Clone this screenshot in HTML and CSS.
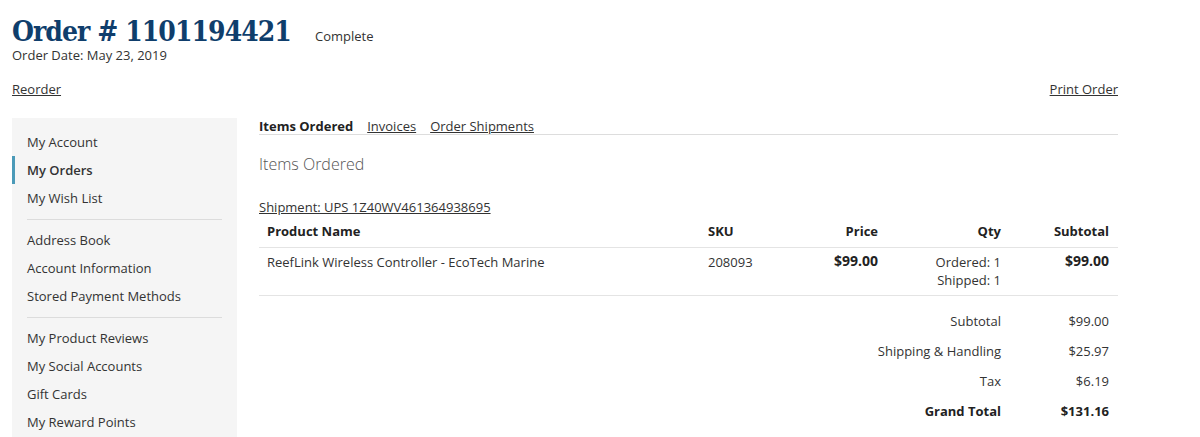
FILE: index.html
```html
<!DOCTYPE html>
<html>
<head>
<meta charset="utf-8">
<link rel="stylesheet" href="styles.css">
</head>
<body>
<div class="page">
  <div class="title-row">
    <h1 class="title">Order # 1101194421</h1>
    <span class="status">Complete</span>
  </div>
  <div class="order-date">Order Date: May 23, 2019</div>
  <div class="actions">
    <a class="link" href="#">Reorder</a>
    <a class="link" href="#">Print Order</a>
  </div>
  <div class="columns">
    <nav class="sidebar">
      <ul class="nav-group">
        <li class="nav-item">My Account</li>
        <li class="nav-item active">My Orders</li>
        <li class="nav-item">My Wish List</li>
      </ul>
      <div class="divider"></div>
      <ul class="nav-group">
        <li class="nav-item">Address Book</li>
        <li class="nav-item">Account Information</li>
        <li class="nav-item">Stored Payment Methods</li>
      </ul>
      <div class="divider"></div>
      <ul class="nav-group">
        <li class="nav-item">My Product Reviews</li>
        <li class="nav-item">My Social Accounts</li>
        <li class="nav-item">Gift Cards</li>
        <li class="nav-item">My Reward Points</li>
      </ul>
    </nav>
    <main class="main">
      <div class="tabs">
        <span class="tab current">Items Ordered</span>
        <a class="tab link" href="#">Invoices</a>
        <a class="tab link" href="#">Order Shipments</a>
      </div>
      <h2 class="section-title">Items Ordered</h2>
      <a class="link shipment" href="#">Shipment: UPS 1Z40WV461364938695</a>
      <table class="items">
        <colgroup>
          <col class="c-name"><col class="c-sku"><col class="c-price"><col class="c-qty"><col class="c-sub">
        </colgroup>
        <thead>
          <tr>
            <th class="left">Product Name</th>
            <th class="left">SKU</th>
            <th>Price</th>
            <th>Qty</th>
            <th>Subtotal</th>
          </tr>
        </thead>
        <tbody>
          <tr>
            <td class="left">ReefLink Wireless Controller - EcoTech Marine</td>
            <td class="left">208093</td>
            <td class="money">$99.00</td>
            <td class="qty">Ordered: 1<br>Shipped: 1</td>
            <td class="money">$99.00</td>
          </tr>
        </tbody>
      </table>
      <div class="totals">
        <div class="t-label">Subtotal</div><div class="t-value">$99.00</div>
        <div class="t-label">Shipping &amp; Handling</div><div class="t-value">$25.97</div>
        <div class="t-label">Tax</div><div class="t-value">$6.19</div>
        <div class="t-label grand">Grand Total</div><div class="t-value grand">$131.16</div>
      </div>
    </main>
  </div>
</div>
</body>
</html>
```

FILE: styles.css
```css
* { box-sizing: border-box; }
html, body { margin: 0; padding: 0; background: #fff; }
body {
  font-family: "Open Sans", "Liberation Sans", sans-serif;
  font-size: 13px;
  color: #333;
  line-height: 18px;
}
.page {
  width: 1106px;
  margin-left: 12px;
  padding-top: 18px;
}
.title-row {
  display: flex;
  align-items: baseline;
  gap: 24px;
  height: 28px;
}
.title {
  margin: 0;
  font-family: "DejaVu Serif Condensed", "DejaVu Serif", serif;
  font-weight: bold;
  font-size: 28px;
  line-height: 28px;
  color: #0f3e6c;
  letter-spacing: -0.95px;
}
.status {
  font-size: 13px;
  color: #333;
  position: relative;
  top: 0;
}
.order-date {
  margin-top: 0;
  line-height: 18px;
}
.actions {
  display: flex;
  justify-content: space-between;
  margin-top: 16px;
}
.link {
  color: #333;
  text-decoration: underline;
}
.columns {
  display: flex;
  gap: 22px;
  margin-top: 20px;
  align-items: flex-start;
}
.sidebar {
  width: 225px;
  flex: none;
  background: #f5f5f5;
  padding: 10px 0 20px;
  min-height: 330px;
}
.nav-group {
  list-style: none;
  margin: 0;
  padding: 0;
}
.nav-item {
  height: 28px;
  line-height: 28px;
  border-left: 3px solid transparent;
  padding-left: 12px;
}
.nav-item.active {
  font-weight: 600;
  border-left-color: #4b9ab8;
}
.divider {
  height: 1px;
  background: #dcdcdc;
  margin: 7px 15px 6px 15px;
}
.main {
  flex: 1;
  min-width: 0;
}
.tabs {
  display: flex;
  gap: 14px;
  border-bottom: 1px solid #dddddd;
  height: 18px;
  line-height: 18px;
  margin-top: -1px;
}
.tab.current { font-weight: 700; color: #222; }
.section-title {
  margin: 0;
  margin-top: 19px;
  font-weight: 300;
  font-size: 16px;
  line-height: 20px;
  color: #555;
}
.shipment {
  display: block;
  margin-top: 24px;
  line-height: 18px;
}
.items {
  width: 100%;
  border-collapse: collapse;
  table-layout: fixed;
  margin-top: 0;
}
.c-name { width: 441px; }
.c-sku { width: 100px; }
.c-price { width: 86px; }
.c-qty { width: 123px; }
.c-sub { width: 109px; }
.items th {
  font-weight: 700;
  text-align: right;
  padding: 6px 8px 7px;
  line-height: 18px;
  border-bottom: 1px solid #e4e4e4;
  color: #222;
}
.items th:last-child, .items td:last-child { padding-right: 9px; }
.items td {
  vertical-align: top;
  text-align: right;
  padding: 5px 8px 6px;
  line-height: 18px;
  border-bottom: 1px solid #e4e4e4;
}
.items .left { text-align: left; }
.items td.money {
  font-weight: 700;
  font-size: 14px;
  color: #222;
  line-height: 16px;
  padding-top: 5px;
}
.items td.qty { line-height: 18px; padding-top: 5px; }
.totals {
  display: grid;
  grid-template-columns: 1fr 109px;
  padding-top: 16px;
}
.t-label, .t-value {
  text-align: right;
  height: 30px;
  line-height: 18px;
}
.t-label { padding-right: 8px; }
.t-value { padding-right: 9px; }
.grand { font-weight: 700; color: #222; }
```
